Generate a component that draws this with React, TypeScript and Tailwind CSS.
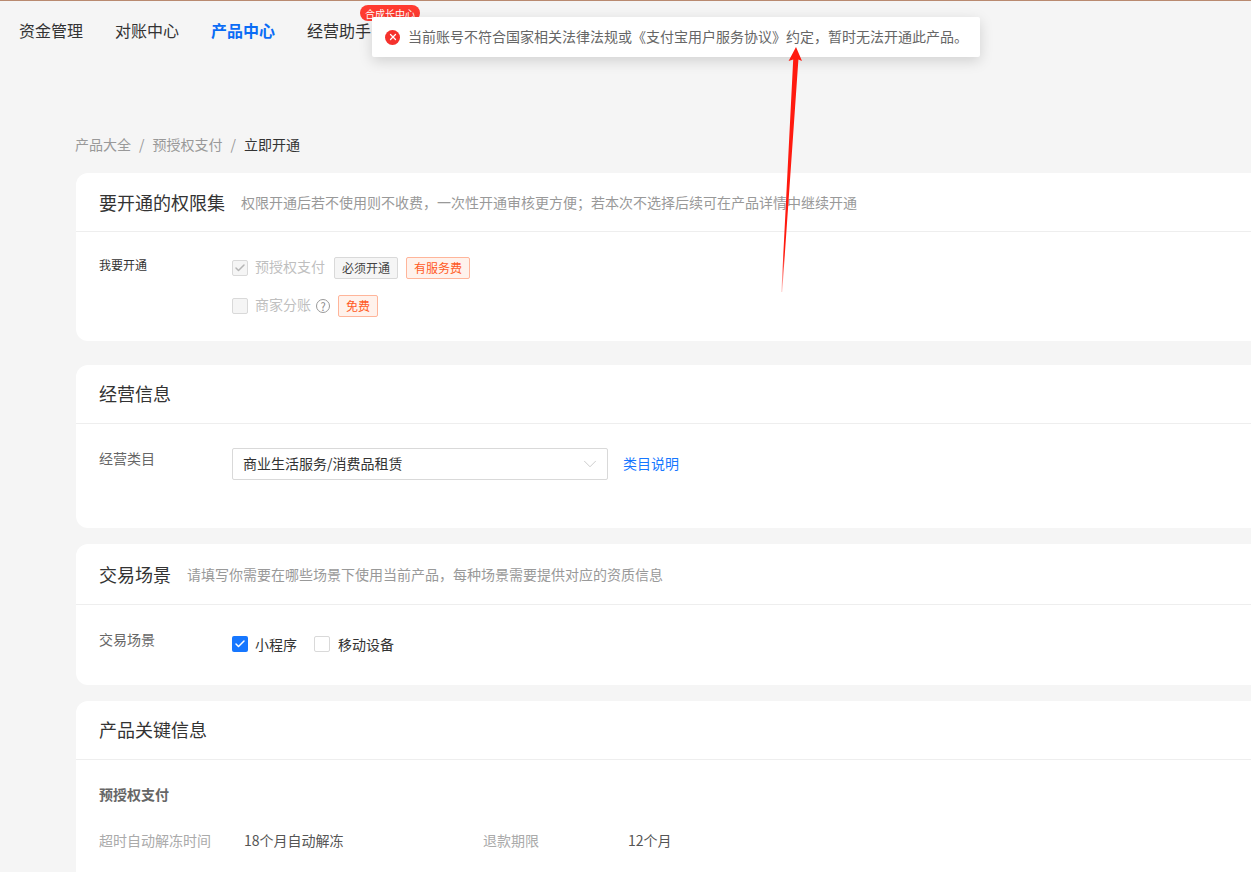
import { Check, ChevronDown, X } from 'lucide-react';

const font = { fontFamily: '"Noto Sans CJK SC", "Noto Sans", sans-serif' };

function Card({ title, hint, className, headerClass, children }: { title: string; hint?: string; className: string; headerClass: string; children: React.ReactNode }) {
  return (
    <section className={`bg-white rounded-[12px] ${className}`}>
      <header className={`flex items-center px-[23px] border-b border-[#eeeeee] ${headerClass}`}>
        <h2 className="text-[18px] leading-[26px] text-[#333333] font-normal">{title}</h2>
        {hint && <span className="ml-[16px] text-[14px] leading-[20px] text-[#999999]">{hint}</span>}
      </header>
      {children}
    </section>
  );
}

function Tag({ children, gray }: { children: React.ReactNode; gray?: boolean }) {
  return (
    <span className={`h-[22px] px-[7px] flex items-center rounded-[2px] border text-[12px] leading-none ${gray ? 'bg-[#f5f5f5] border-[#d9d9d9] text-[#444444]' : 'bg-[#fff2ec] border-[#ffb59a] text-[#ff5a24]'}`}>
      {children}
    </span>
  );
}

function Arrow() {
  return (
    <svg className="absolute left-[775px] top-[44px] pointer-events-none" width="32" height="252" viewBox="0 0 32 252" fill="none">
      <defs>
        <linearGradient id="tail" x1="0" y1="0" x2="0" y2="1">
          <stop offset="0" stopColor="#ff1a0f" />
          <stop offset="0.85" stopColor="#ff1a0f" />
          <stop offset="1" stopColor="#ff1a0f" stopOpacity="0.25" />
        </linearGradient>
      </defs>
      <path d="M21 3 L27 17 L23.4 15.5 L7.2 248 L6.4 248 L18.2 15.5 L13.6 17 Z" fill="url(#tail)" />
    </svg>
  );
}

export default function App() {
  return (
    <div className="relative w-[1251px] h-[872px] overflow-hidden bg-[#f5f5f5] text-[#333333]" style={font}>
      <div className="h-px bg-[#b98a70]" />

      <nav className="flex items-center gap-[32px] h-[58px] pl-[19px] text-[16px] text-[#333333]">
        <span>资金管理</span>
        <span>对账中心</span>
        <span className="font-bold text-[#0a6cf5]">产品中心</span>
        <span>经营助手</span>
      </nav>

      <main className="pl-[76px] mr-[-24px] flex flex-col">
        <div className="mt-[75px] ml-[-1px] h-[20px] flex items-center gap-[8px] text-[14px] leading-[20px] text-[#999999]">
          <span>产品大全</span>
          <span>/</span>
          <span>预授权支付</span>
          <span>/</span>
          <span className="text-[#333333]">立即开通</span>
        </div>

        <Card title="要开通的权限集" hint="权限开通后若不使用则不收费，一次性开通审核更方便；若本次不选择后续可在产品详情中继续开通" className="mt-[19px] h-[168px]" headerClass="h-[59px]">
          <div className="flex pt-[24px] pl-[23px]">
            <div className="w-[133px] text-[12px] leading-[18px] text-[#333333]">我要开通</div>
            <div className="flex flex-col gap-[16px] pt-[1px]">
              <div className="flex items-center h-[22px]">
                <span className="w-[16px] h-[16px] flex items-center justify-center rounded-[2px] border border-[#d9d9d9] bg-[#f5f5f5]">
                  <Check size={12} strokeWidth={3} className="text-[#b5b5b5]" />
                </span>
                <span className="ml-[7px] text-[14px] leading-[20px] mt-[-4px] text-[#bfbfbf]">预授权支付</span>
                <span className="ml-[9px]"><Tag gray>必须开通</Tag></span>
                <span className="ml-[8px]"><Tag>有服务费</Tag></span>
              </div>
              <div className="flex items-center h-[22px]">
                <span className="w-[16px] h-[16px] rounded-[2px] border border-[#d9d9d9] bg-[#f5f5f5]" />
                <span className="ml-[7px] text-[14px] leading-[20px] mt-[-4px] text-[#bfbfbf]">商家分账</span>
                <span className="ml-[5px] w-[14px] h-[14px] flex items-center justify-center rounded-full border border-[#999999] text-[11px] leading-none text-[#888888]">?</span>
                <span className="ml-[8px]"><Tag>免费</Tag></span>
              </div>
            </div>
          </div>
        </Card>

        <Card title="经营信息" className="mt-[24px] h-[163px]" headerClass="h-[59px] pb-[2px]">
          <div className="flex items-start pt-[24px] pl-[23px]">
            <div className="w-[133px] text-[14px] leading-[20px] text-[#666666]">经营类目</div>
            <div className="w-[376px] h-[32px] pl-[10px] pr-[6px] pb-[2px] flex items-center justify-between rounded-[2px] border border-[#d9d9d9] bg-white text-[14px] text-[#333333]">
              <span>商业生活服务/消费品租赁</span>
              <ChevronDown size={22} strokeWidth={0.8} className="text-[#bbbbbb] mt-[2px]" />
            </div>
            <a className="ml-[15px] text-[14px] leading-[30px] text-[#1677ff]">类目说明</a>
          </div>
        </Card>

        <Card title="交易场景" hint="请填写你需要在哪些场景下使用当前产品，每种场景需要提供对应的资质信息" className="mt-[16px] h-[141px]" headerClass="h-[61px]">
          <div className="flex pt-[24px] pl-[23px]">
            <div className="w-[133px] text-[14px] leading-[20px] text-[#666666]">交易场景</div>
            <div className="flex items-center h-[20px] mt-[5px]">
              <span className="w-[16px] h-[16px] flex items-center justify-center rounded-[2px] bg-[#1677ff]">
                <Check size={12} strokeWidth={3} className="text-white" />
              </span>
              <span className="ml-[7px] text-[14px] text-[#333333]">小程序</span>
              <span className="ml-[17px] w-[16px] h-[16px] rounded-[2px] border border-[#d9d9d9] bg-white" />
              <span className="ml-[8px] text-[14px] text-[#333333]">移动设备</span>
            </div>
          </div>
        </Card>

        <Card title="产品关键信息" className="mt-[16px] h-[200px]" headerClass="h-[59px] pb-[2px]">
          <div className="pt-[24px] pl-[23px]">
            <div className="text-[14px] leading-[20px] font-bold text-[#666666]">预授权支付</div>
            <div className="mt-[26px] flex items-center text-[14px] leading-[20px]">
              <span className="w-[145px] text-[#aaaaaa]">超时自动解冻时间</span>
              <span className="w-[239px] text-[#555555]">18个月自动解冻</span>
              <span className="w-[145px] text-[#aaaaaa]">退款期限</span>
              <span className="text-[#555555]">12个月</span>
            </div>
          </div>
        </Card>
      </main>

      <span className="absolute left-[360px] top-[5px] w-[60px] h-[16px] pt-[2px] flex items-center justify-center rounded-full bg-[#ff3b30] text-[10px] leading-none text-white">
        合成长中心
      </span>

      <div className="absolute left-[372px] top-[17px] w-[608px] h-[40px] pl-[13px] flex items-center rounded-[2px] bg-white shadow-[0_4px_14px_rgba(0,0,0,0.15)]">
        <span className="w-[15px] h-[15px] flex items-center justify-center rounded-full bg-[#f5322d]">
          <X size={10} strokeWidth={3} className="text-white" />
        </span>
        <span className="ml-[8px] mt-[-2px] text-[14px] text-[#666666] whitespace-nowrap">当前账号不符合国家相关法律法规或《支付宝用户服务协议》约定，暂时无法开通此产品。</span>
      </div>

      <Arrow />
    </div>
  );
}
